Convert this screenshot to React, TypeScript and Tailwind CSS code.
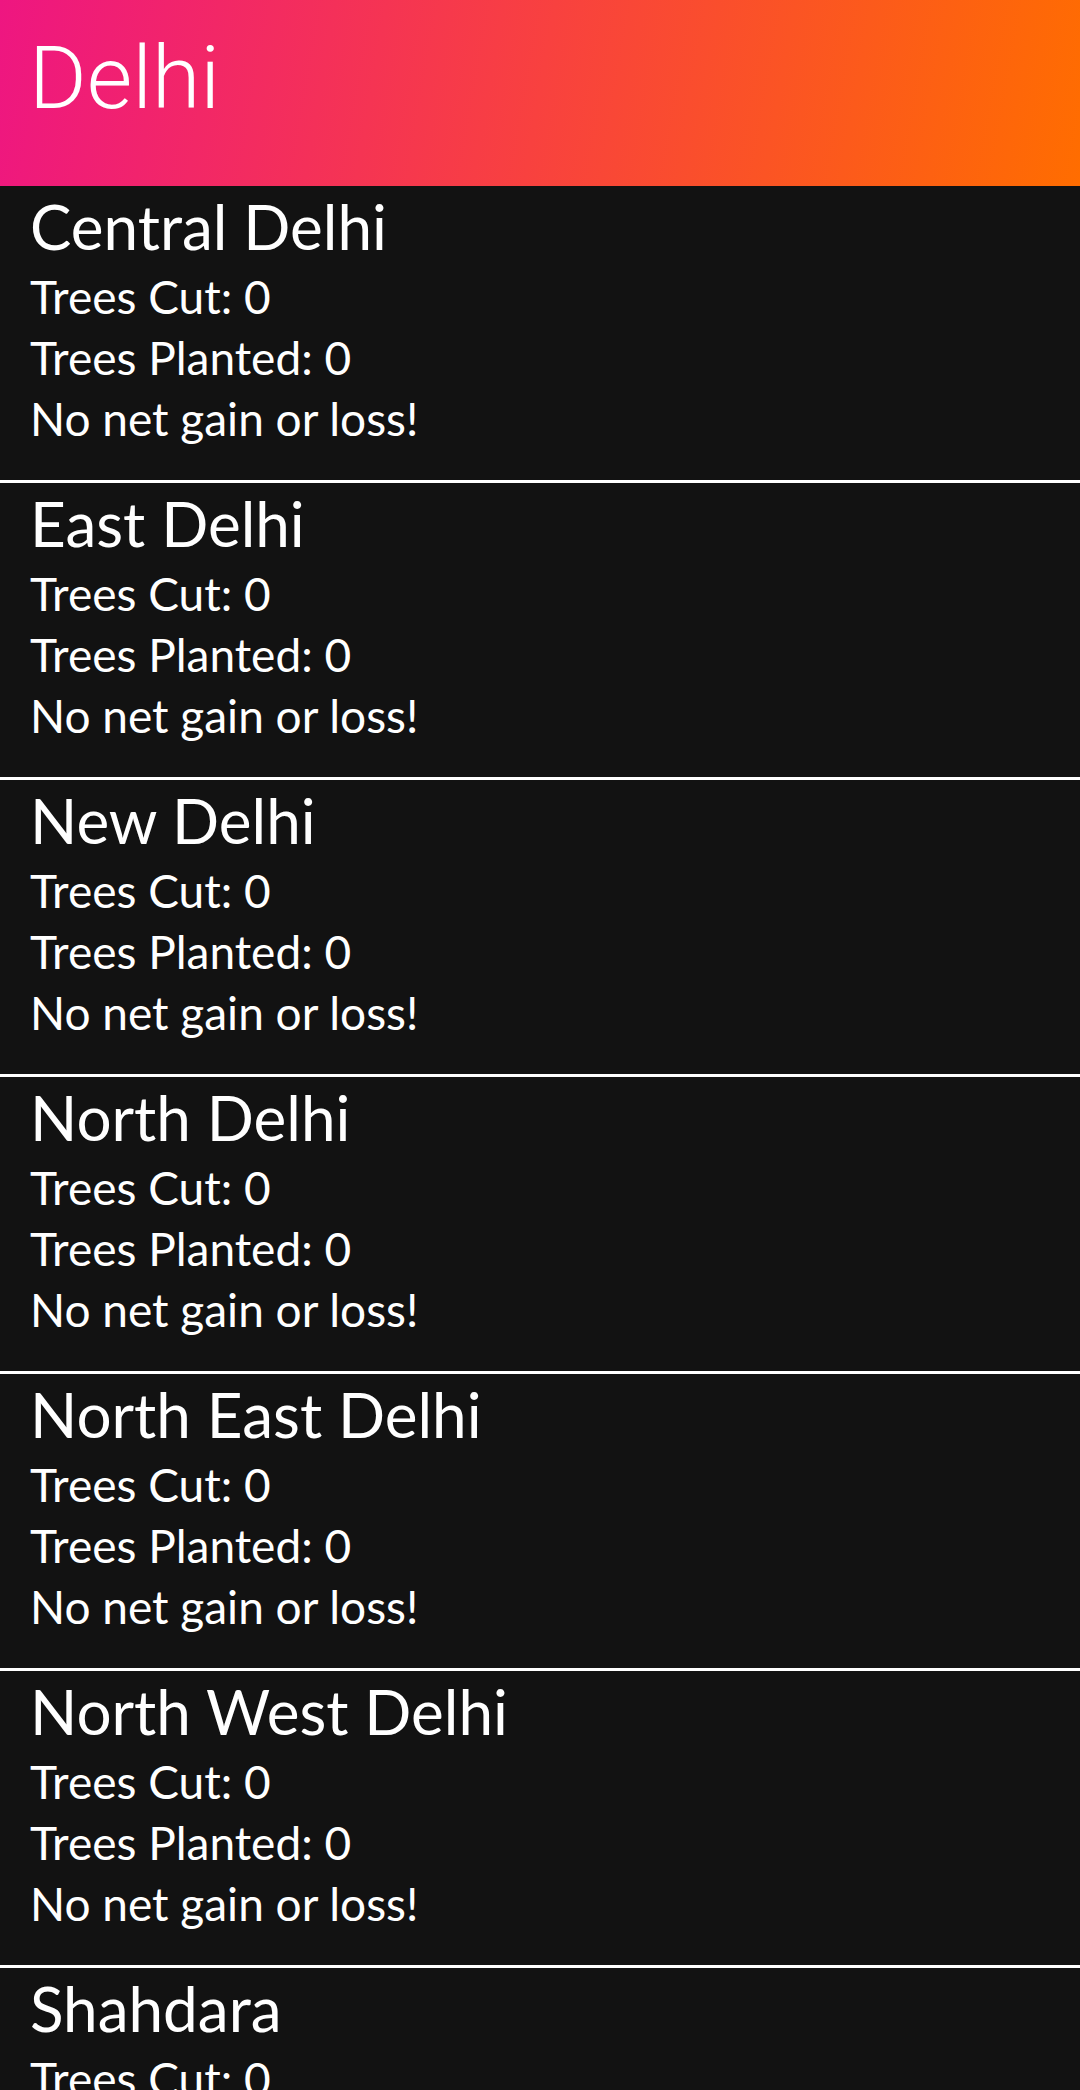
import React from 'react';

const districts = [
  'Central Delhi',
  'East Delhi',
  'New Delhi',
  'North Delhi',
  'North East Delhi',
  'North West Delhi',
  'Shahdara',
  'South Delhi',
  'South East Delhi',
  'South West Delhi',
  'West Delhi',
];

const DistrictCard: React.FC<{ name: string; cut: number; planted: number }> = ({ name, cut, planted }) => {
  const net = planted - cut;
  return (
    <div className="border-b-[3px] border-white pt-[1px] pb-[31px] px-[30px]">
      <h2 className="text-[62px] leading-[79px] font-normal text-white">{name}</h2>
      <p className="text-[46px] leading-[61px] font-normal text-white">Trees Cut: {cut}</p>
      <p className="text-[46px] leading-[61px] font-normal text-white">Trees Planted: {planted}</p>
      <p className="text-[46px] leading-[61px] font-normal text-white">
        {net === 0 ? 'No net gain or loss!' : net > 0 ? `Net gain: ${net}` : `Net loss: ${-net}`}
      </p>
    </div>
  );
};

export default function App() {
  return (
    <div className="min-h-screen bg-[#121212] font-['Lato',sans-serif]">
      <header className="h-[186px] bg-linear-[100deg] from-[#ee1681] via-[#f8413f] to-[#ff6d00] px-[29px] pt-[26px]">
        <h1 className="font-['Roboto',sans-serif] font-light text-[88px] leading-[104px] text-white">Delhi</h1>
      </header>
      <div>
        {districts.map((d) => (
          <DistrictCard key={d} name={d} cut={0} planted={0} />
        ))}
      </div>
    </div>
  );
}
